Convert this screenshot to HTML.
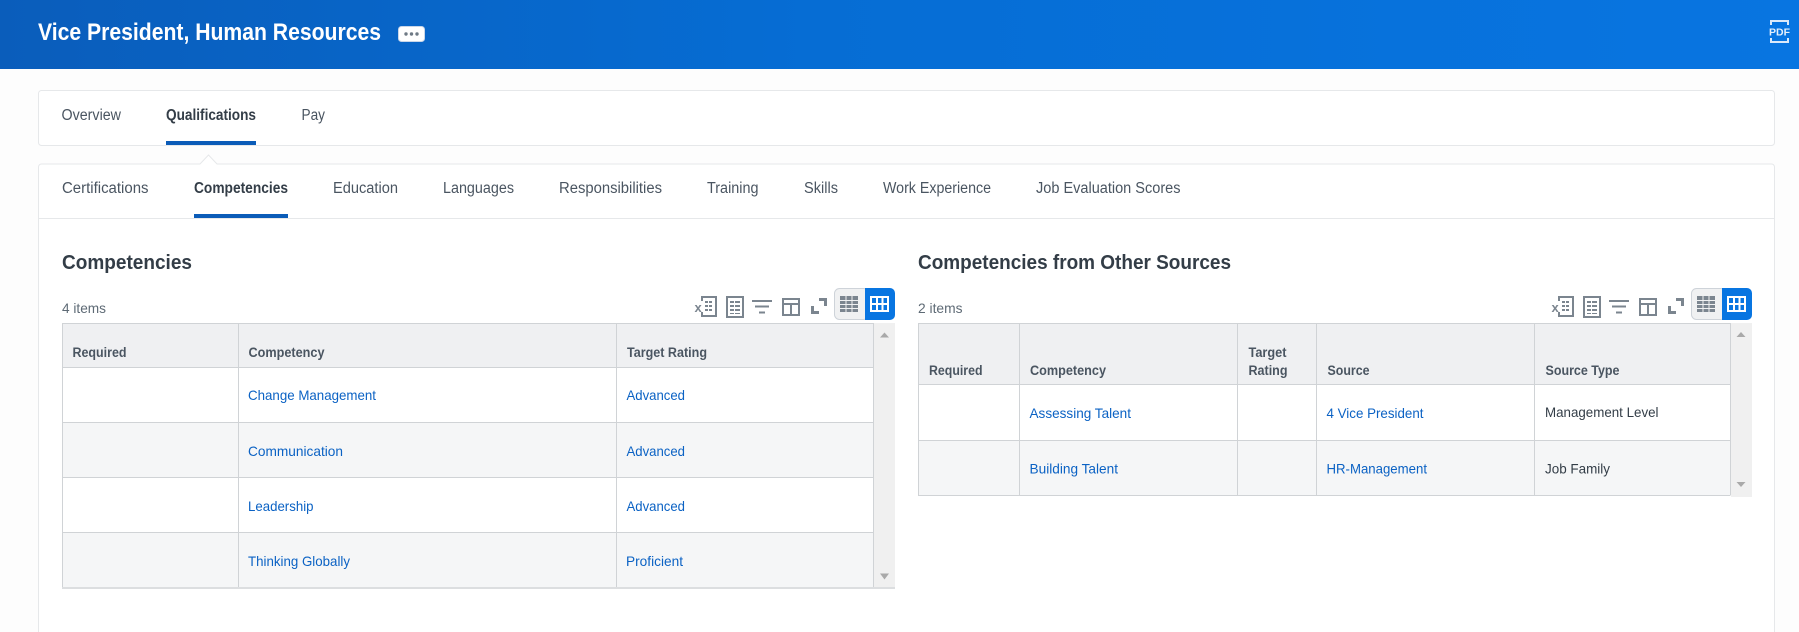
<!DOCTYPE html>
<html><head><meta charset="utf-8"><title>Vice President, Human Resources</title>
<style>
html,body{margin:0;padding:0;background:#fff;width:1799px;height:632px;overflow:hidden}
svg{display:block}
text{font-family:"Liberation Sans",sans-serif}
.t{font-size:15.5px;fill:#4a5561}
.a{font-size:15.5px;fill:#333d47;font-weight:bold}
.h{font-size:20px;font-weight:bold;fill:#333d47}
.c{font-size:13.5px;font-weight:bold;fill:#4a5561}
.l{font-size:14px;fill:#0b62c4}
.d{font-size:14px;fill:#333d47}
.n{font-size:14px;fill:#5e6a75}
.i{fill:none;stroke:#7b858f;stroke-width:2}
.f{fill:#7b858f}
</style></head><body>
<svg width="1799" height="632" viewBox="0 0 1799 632" xmlns="http://www.w3.org/2000/svg">
<defs><linearGradient id="g" x1="0" x2="1" y1="0" y2="0"><stop offset="0" stop-color="#0a5dbb"/><stop offset=".45" stop-color="#066dd4"/><stop offset="1" stop-color="#0875e1"/></linearGradient></defs>
<rect width="1799" height="69" fill="url(#g)"/>
<rect y="69" width="1799" height="563" fill="#fdfdfd"/>
<text x="38" y="40" font-size="24" font-weight="bold" fill="#fff" textLength="343" lengthAdjust="spacingAndGlyphs">Vice President, Human Resources</text>
<rect x="398.500" y="26.500" width="26" height="15" rx="3" fill="#fff" stroke="#c9d6e8"/>
<circle cx="406" cy="34" r="1.700" fill="#6f7a85"/><circle cx="411.500" cy="34" r="1.700" fill="#6f7a85"/><circle cx="417" cy="34" r="1.700" fill="#6f7a85"/>
<!-- PDF icon -->
<path d="M1771 25v-4h17v4M1771 38v4h17v-4" fill="none" stroke="#dbe9fa" stroke-width="2"/>
<text x="1769" y="35.500" font-size="10.500" font-weight="bold" fill="#e6f0fb" textLength="21" lengthAdjust="spacingAndGlyphs">PDF</text>

<!-- top tab card -->
<rect x="38.500" y="90.500" width="1736" height="55" rx="3" fill="#fff" stroke="#e6e8ea"/>
<text class="t" x="61.500" y="120" textLength="59.500" lengthAdjust="spacingAndGlyphs">Overview</text>
<text class="a" x="166" y="120" textLength="90" lengthAdjust="spacingAndGlyphs">Qualifications</text>
<text class="t" x="301.500" y="120" textLength="23.500" lengthAdjust="spacingAndGlyphs">Pay</text>
<rect x="166" y="141" width="90" height="4" fill="#0b5cb8"/>

<!-- main card -->
<path d="M38.500 640V167a3 3 0 0 1 3-3H200l8.500-9 8.500 9H1771.500a3 3 0 0 1 3 3V640" fill="#fff" stroke="#e6e8ea"/>
<text class="t" x="62" y="193" textLength="86.500" lengthAdjust="spacingAndGlyphs">Certifications</text>
<text class="a" x="194" y="193" textLength="94" lengthAdjust="spacingAndGlyphs">Competencies</text>
<text class="t" x="333" y="193" textLength="65" lengthAdjust="spacingAndGlyphs">Education</text>
<text class="t" x="443" y="193" textLength="71" lengthAdjust="spacingAndGlyphs">Languages</text>
<text class="t" x="559" y="193" textLength="103" lengthAdjust="spacingAndGlyphs">Responsibilities</text>
<text class="t" x="707" y="193" textLength="51.500" lengthAdjust="spacingAndGlyphs">Training</text>
<text class="t" x="804" y="193" textLength="34" lengthAdjust="spacingAndGlyphs">Skills</text>
<text class="t" x="883" y="193" textLength="108" lengthAdjust="spacingAndGlyphs">Work Experience</text>
<text class="t" x="1036" y="193" textLength="144.500" lengthAdjust="spacingAndGlyphs">Job Evaluation Scores</text>
<rect x="39" y="218" width="1735" height="1" fill="#e6e8ea"/>
<rect x="194" y="214" width="94" height="4" fill="#0b5cb8"/>

<text class="h" x="62" y="269" textLength="130" lengthAdjust="spacingAndGlyphs">Competencies</text>
<text class="h" x="918" y="269" textLength="313" lengthAdjust="spacingAndGlyphs">Competencies from Other Sources</text>
<text class="n" x="62" y="313" textLength="44" lengthAdjust="spacingAndGlyphs">4 items</text>
<text class="n" x="918" y="313" textLength="44.500" lengthAdjust="spacingAndGlyphs">2 items</text>

<!-- toolbars -->
<g id="tb">
<path class="i" d="M702 301v-4h14v19h-14v-4"/><path class="f" d="M705 301h3v2h-3zM709 301h3v2h-3zM705 305h3v2h-3zM709 305h3v2h-3zM705 309h3v2h-3zM709 309h3v2h-3z"/>
<text x="694.500" y="312" font-size="13" font-weight="bold" fill="#7b858f">x</text>
<rect class="i" x="727" y="297" width="16" height="20"/><path class="f" d="M730 301h4v2h-4zM735 301h5v2h-5zM730 305h4v2h-4zM735 305h5v2h-5zM730 309h4v2h-4zM735 309h5v2h-5zM730 313h4v1h-4zM735 313h5v1h-5z"/>
<path class="i" d="M752 301h20M755 306.500h14M759 312.500h6"/>
<rect class="i" x="783" y="299" width="16" height="16"/><path class="i" d="M783 304h16M791 304v11"/>
<path d="M811 306v8h8v-3h-5v-5zM819 298h8v8h-3v-5h-5z" class="f"/>
<rect x="834.500" y="288.500" width="34" height="31" rx="5" fill="#f0f1f2" stroke="#ced3d9"/>
<path d="M865 288h25a5 5 0 0 1 5 5v22a5 5 0 0 1-5 5h-25z" fill="#0875e1"/>
<rect x="840" y="296" width="18" height="16" fill="#7b858f"/><path d="M840 300.500h18M840 304.500h18M840 308.500h18M846 296v16M852 296v16" stroke="#f0f1f2"/>
<rect x="871" y="297" width="17" height="14" fill="none" stroke="#fff" stroke-width="2"/><path d="M871 304h17M877 296v16M882.500 296v16" stroke="#fff" stroke-width="2"/>
</g>
<use href="#tb" x="857" y="0"/>

<!-- left table -->
<rect x="873" y="323" width="22" height="266" fill="#f0f0f0"/>
<rect x="62" y="324" width="811" height="43" fill="#eff0f2"/>
<rect x="62" y="422" width="811" height="55" fill="#f5f6f7"/>
<rect x="62" y="532" width="811" height="55" fill="#f5f6f7"/>
<path d="M62 323.500H873.500V587.500M62 367.500H873M62 422.500H873M62 477.500H873M62 532.500H873M62.500 323V588M238.500 323V588M616.500 323V588" fill="none" stroke="#d0d3d6"/>
<rect x="62" y="587" width="833" height="2" fill="#dcdee0"/>
<path d="M880 337.500l4.500-5 4.500 5z" fill="#a9a9a9"/><path d="M880 573.500l4.500 6 4.500-6z" fill="#a9a9a9"/>
<text class="c" x="72.500" y="357" textLength="54" lengthAdjust="spacingAndGlyphs">Required</text>
<text class="c" x="248.500" y="357" textLength="76" lengthAdjust="spacingAndGlyphs">Competency</text>
<text class="c" x="627" y="357" textLength="80" lengthAdjust="spacingAndGlyphs">Target Rating</text>
<text class="l" x="248" y="400" textLength="128" lengthAdjust="spacingAndGlyphs">Change Management</text>
<text class="l" x="248" y="456" textLength="95" lengthAdjust="spacingAndGlyphs">Communication</text>
<text class="l" x="248" y="511" textLength="65.500" lengthAdjust="spacingAndGlyphs">Leadership</text>
<text class="l" x="248" y="566" textLength="102" lengthAdjust="spacingAndGlyphs">Thinking Globally</text>
<text class="l" x="626.500" y="400" textLength="58.500" lengthAdjust="spacingAndGlyphs">Advanced</text>
<text class="l" x="626.500" y="456" textLength="58.500" lengthAdjust="spacingAndGlyphs">Advanced</text>
<text class="l" x="626.500" y="511" textLength="58.500" lengthAdjust="spacingAndGlyphs">Advanced</text>
<text class="l" x="626" y="566" textLength="57" lengthAdjust="spacingAndGlyphs">Proficient</text>

<!-- right table -->
<rect x="1731" y="323" width="21" height="174" fill="#f0f0f0"/>
<rect x="918" y="324" width="813" height="60" fill="#eff0f2"/>
<rect x="918" y="440" width="813" height="55" fill="#f5f6f7"/>
<path d="M918 323.500H1730.500V495.500M918 384.500H1730M918 440.500H1730M918 495.500H1730M918.500 323V496M1019.500 323V496M1237.500 323V496M1316.500 323V496M1534.500 323V496" fill="none" stroke="#d0d3d6"/>
<path d="M1736.500 337l4.500-5 4.500 5z" fill="#a9a9a9"/><path d="M1736.500 482l4.500 5 4.500-5z" fill="#a9a9a9"/>
<text class="c" x="929" y="375" textLength="53.500" lengthAdjust="spacingAndGlyphs">Required</text>
<text class="c" x="1030" y="375" textLength="76" lengthAdjust="spacingAndGlyphs">Competency</text>
<text class="c" x="1248.500" y="357" textLength="38" lengthAdjust="spacingAndGlyphs">Target</text>
<text class="c" x="1248.500" y="375" textLength="39" lengthAdjust="spacingAndGlyphs">Rating</text>
<text class="c" x="1327.500" y="375" textLength="42" lengthAdjust="spacingAndGlyphs">Source</text>
<text class="c" x="1545.500" y="375" textLength="74" lengthAdjust="spacingAndGlyphs">Source Type</text>
<text class="l" x="1029.500" y="418" textLength="101.500" lengthAdjust="spacingAndGlyphs">Assessing Talent</text>
<text class="l" x="1029.500" y="473.500" textLength="88.500" lengthAdjust="spacingAndGlyphs">Building Talent</text>
<text class="l" x="1326.500" y="418" textLength="97" lengthAdjust="spacingAndGlyphs">4 Vice President</text>
<text class="l" x="1326.500" y="473.500" textLength="100.500" lengthAdjust="spacingAndGlyphs">HR-Management</text>
<text class="d" x="1545" y="417" textLength="113.500" lengthAdjust="spacingAndGlyphs">Management Level</text>
<text class="d" x="1545" y="473.500" textLength="65" lengthAdjust="spacingAndGlyphs">Job Family</text>
</svg>
</body></html>
